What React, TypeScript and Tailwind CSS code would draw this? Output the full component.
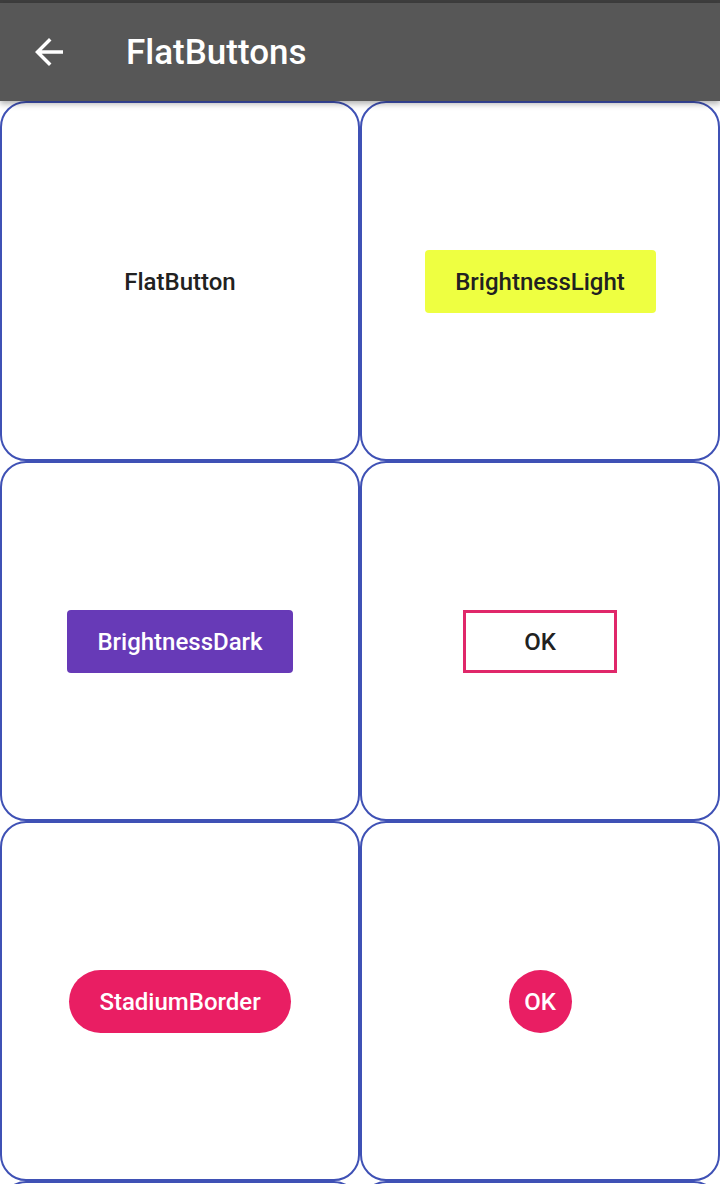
const BackArrow = () => (
  <svg width="42" height="42" viewBox="0 0 24 24" fill="#ffffff">
    <path d="M20 11H7.83l5.59-5.59L12 4l-8 8 8 8 1.41-1.41L7.83 13H20v-2z" />
  </svg>
);

const Cell = ({ children }: { children?: React.ReactNode }) => (
  <div className="h-[360px] border-2 border-[#3f51b5] rounded-[26px] flex items-center justify-center">
    {children}
  </div>
);

const btn = "h-[63px] px-[28px] pt-[2px] flex items-center justify-center text-[24px] font-medium";

export default function App() {
  return (
    <div
      className="h-[1184px] w-[720px] overflow-hidden bg-white"
      style={{ fontFamily: "Roboto, 'Liberation Sans', sans-serif" }}
    >
      <div className="h-[3px] bg-[#3e3e3e]" />
      <div className="relative z-10 h-[98px] bg-[#575757] flex items-center shadow-[0_3px_6px_rgba(0,0,0,0.3)]">
        <div className="w-[42px] h-[42px] ml-[28px]">
          <BackArrow />
        </div>
        <div className="ml-[56px] text-white text-[35px] font-medium leading-none pt-[1px]">
          FlatButtons
        </div>
      </div>
      <div className="grid grid-cols-2">
        <Cell>
          <button className={`${btn} text-[#212121]`}>FlatButton</button>
        </Cell>
        <Cell>
          <button className={`${btn} text-[#212121] bg-[#eeff41] rounded-[4px] min-w-[231px]`}>
            BrightnessLight
          </button>
        </Cell>
        <Cell>
          <button className={`${btn} text-white bg-[#673ab7] rounded-[4px] min-w-[226px]`}>
            BrightnessDark
          </button>
        </Cell>
        <Cell>
          <button className={`${btn} text-[#212121] border-[3px] border-[#e0286a] min-w-[154px] h-[62px]`}>
            OK
          </button>
        </Cell>
        <Cell>
          <button className={`${btn} text-white bg-[#e91e63] rounded-full min-w-[222px] h-[62px]`}>
            StadiumBorder
          </button>
        </Cell>
        <Cell>
          <button className="w-[63px] h-[63px] pt-[2px] rounded-full bg-[#e91e63] text-white text-[24px] font-medium flex items-center justify-center">
            OK
          </button>
        </Cell>
        <Cell />
        <Cell />
      </div>
    </div>
  );
}
